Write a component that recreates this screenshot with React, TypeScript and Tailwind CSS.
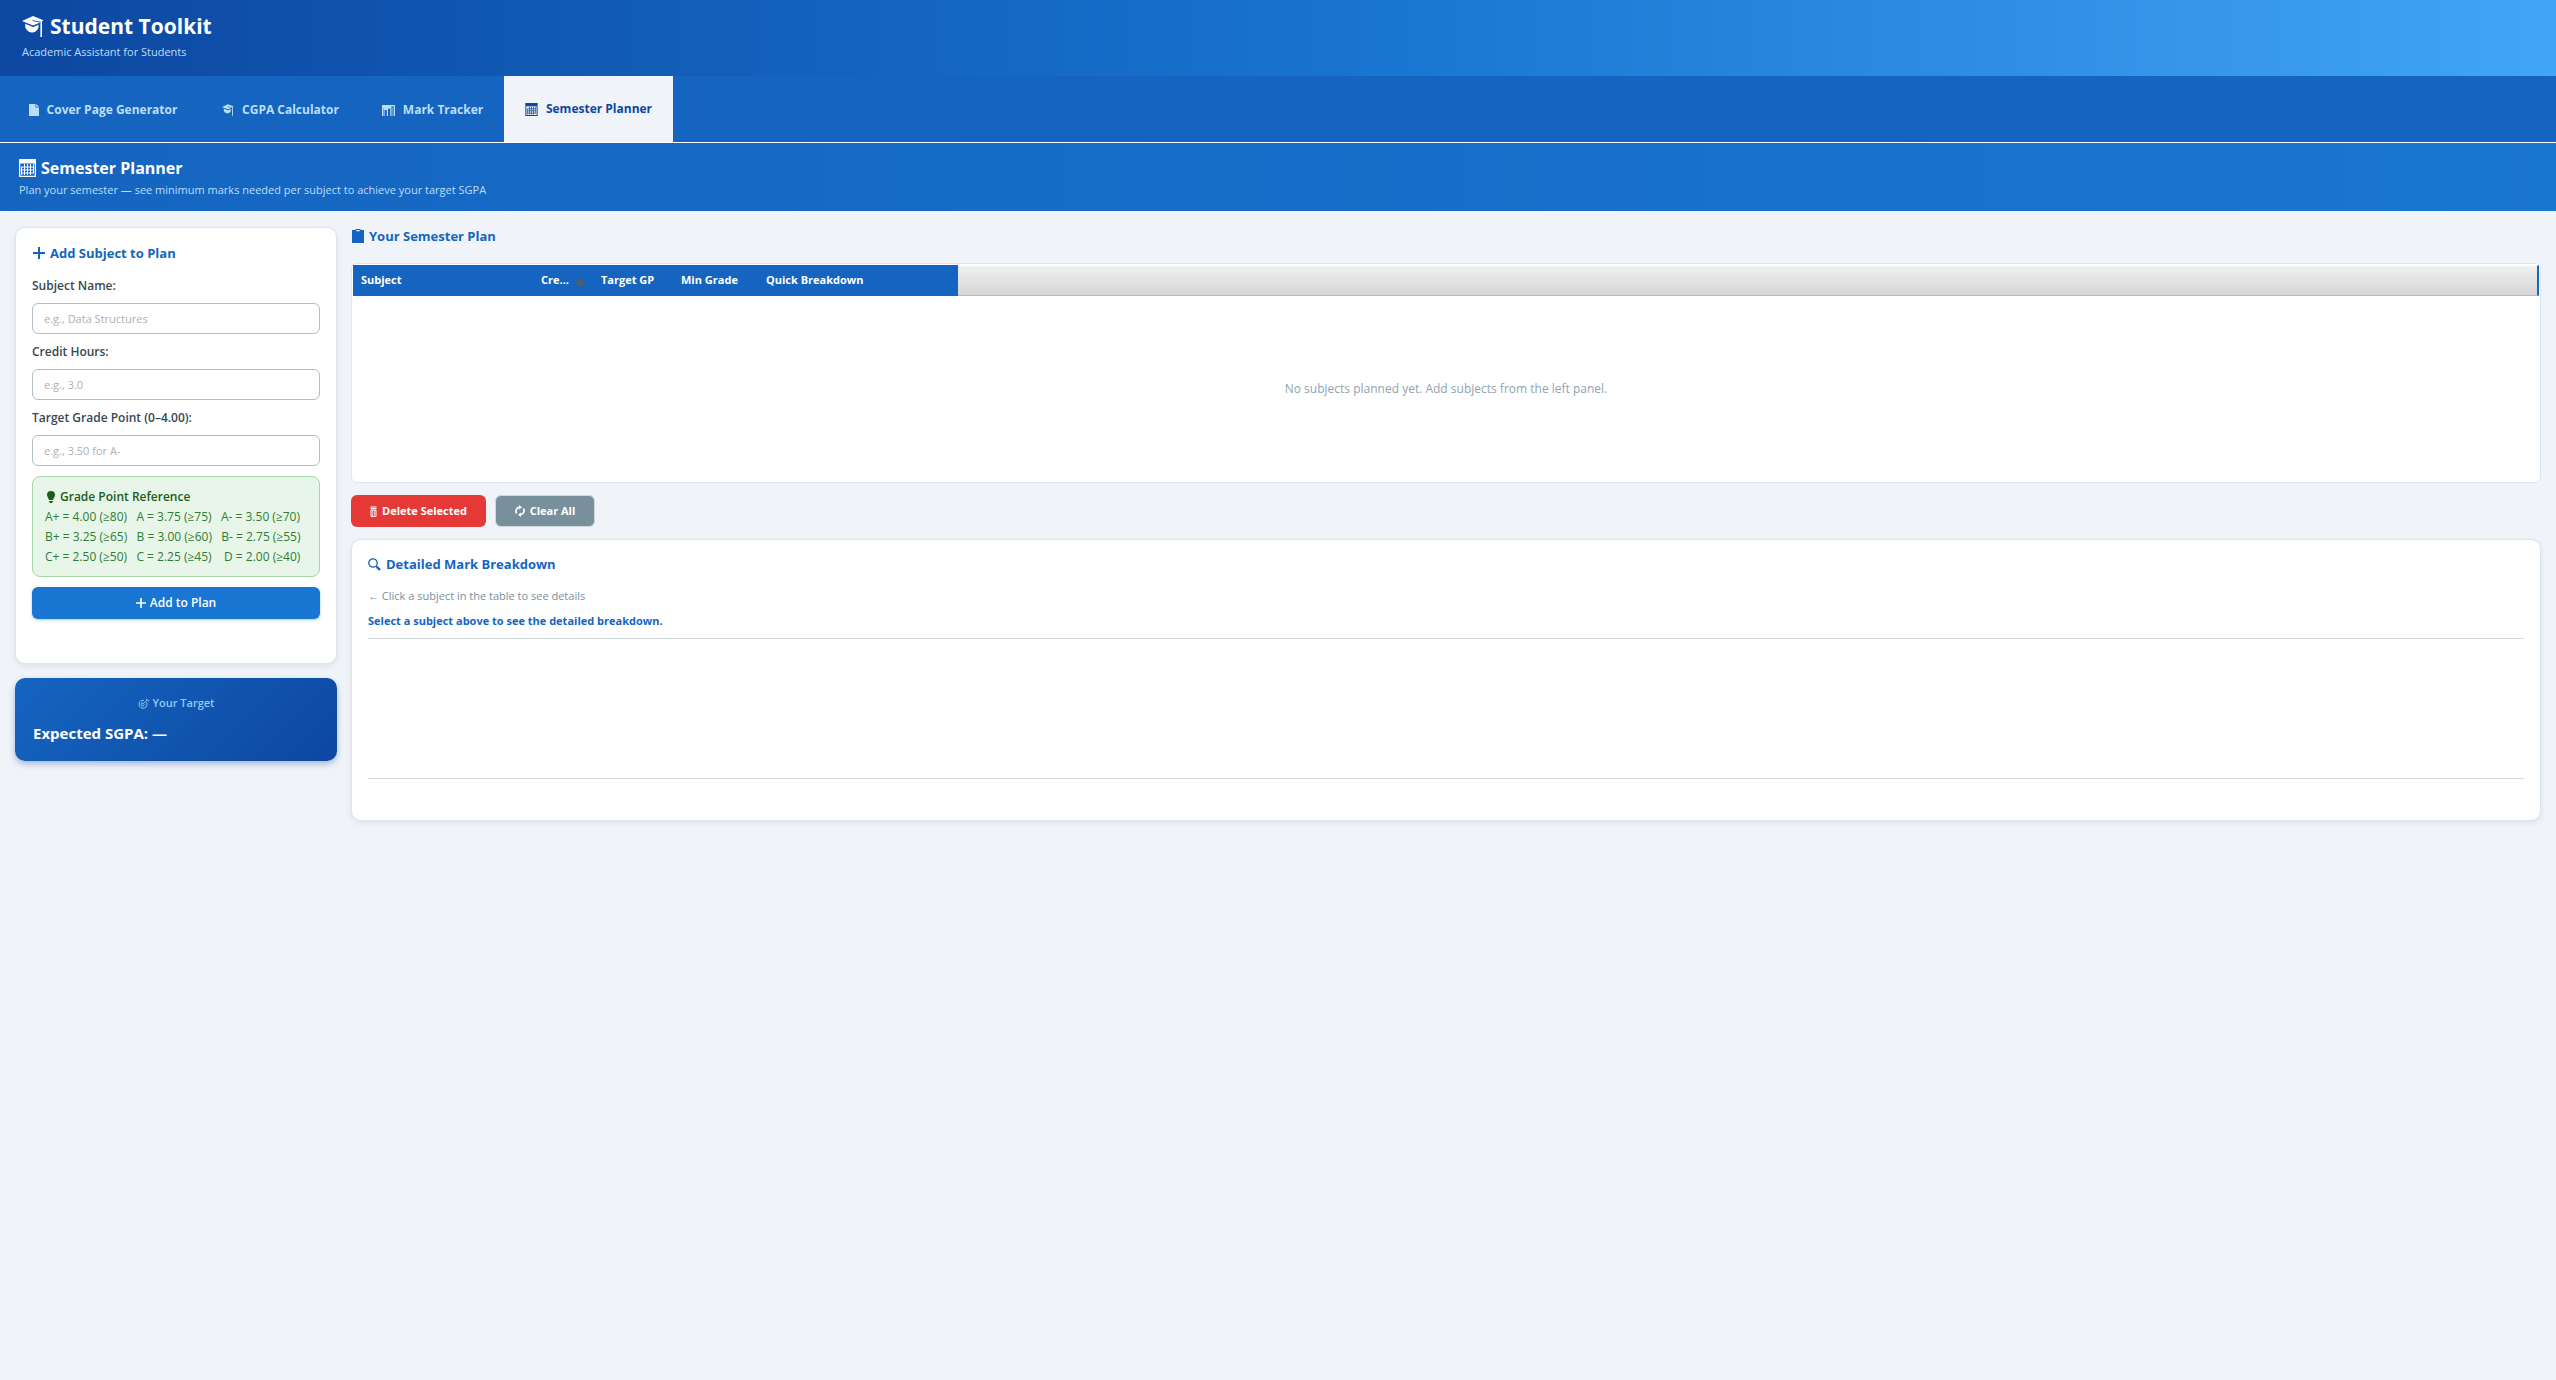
import React from "react";

type IconProps = { className?: string };

function CapIcon({ className }: IconProps) {
  return (
    <svg viewBox="0 0 22 21" className={className} fill="currentColor" aria-hidden="true">
      <path d="M11 0 21.5 4.200 20 5.200V21h-1.600V6.600L11 9.400 0 5z" />
      <path d="M3.200 7.200v4c1.200 3.600 4.300 5.300 7 5.300 2.600 0 5-1.700 6.300-4.700V8.600L11 11z" />
      <path d="M10.500 4.600 18.800 6.200" fill="none" stroke="#1150ab" strokeWidth=".9" />
      <path d="M3.200 7.400 11 10.300l5.500-2" fill="none" stroke="#1150ab" strokeWidth=".9" />
    </svg>
  );
}

function PageIcon({ className }: IconProps) {
  return (
    <svg viewBox="0 0 10 12" className={className} fill="currentColor" aria-hidden="true">
      <path d="M0 0h6.500v3.500H10V12H0z" />
      <path d="M7.200 0 10 2.800H7.200z" />
    </svg>
  );
}

function ChartIcon({ className }: IconProps) {
  return (
    <svg viewBox="0 0 13 11" className={className} fill="currentColor" aria-hidden="true">
      <path d="M0 0h13v11h-1.200V1.200H9.500V11H8.300V3.500H6V11H4.800V5H2.600v6H1.500V3.500H1V11H0z" />
      <path d="M2.600 2.200h5v1.300h-5zM10.300 2h1v9h-1z" opacity=".6" />
    </svg>
  );
}

function CalendarIcon({ className }: IconProps) {
  return (
    <svg viewBox="0 0 17 18" className={className} fill="currentColor" aria-hidden="true">
      <path fillRule="evenodd" d="M0 0h17v18H0zM1.300 4.500v12.200h14.400V4.500z" />
      <path d="M5 5h1v11H5zM8 5h1v11H8zM11 5h1v11h-1zM14 5h1v9h-1zM2.500 7.500H15v1H2.500zM2.500 10.500H15v1H2.500zM2.500 13.500H15v1H2.500zM2 8h1v8H2z" />
    </svg>
  );
}

function ClipboardIcon({ className }: IconProps) {
  return (
    <svg viewBox="0 0 12 14" className={className} fill="currentColor" aria-hidden="true">
      <path fillRule="evenodd" d="M0 1h3.500V0h5v1H12v13H0zM4.300 1v1.200h3.400V1z" />
    </svg>
  );
}

function PlusIcon({ className }: IconProps) {
  return (
    <svg viewBox="0 0 12 12" className={className} fill="currentColor" aria-hidden="true">
      <path d="M5 0h2v5h5v2H7v5H5V7H0V5h5z" />
    </svg>
  );
}

function BulbIcon({ className }: IconProps) {
  return (
    <svg viewBox="0 0 8 12" className={className} fill="currentColor" aria-hidden="true">
      <path d="M4 0a4 4 0 0 1 4 4c0 2-1.700 3-2 5H2C1.700 7 0 6 0 4a4 4 0 0 1 4-4zM2.200 10h3.600v1L5 12H3l-.8-1z" />
    </svg>
  );
}

function TargetIcon({ className }: IconProps) {
  return (
    <svg viewBox="0 0 12 11" className={className} fill="none" stroke="currentColor" aria-hidden="true">
      <path d="M8.300 4A4 4 0 1 1 6 2.400" />
      <path d="M6.200 6.300a1.600 1.600 0 1 1-1-1.300M4.600 6.400 9.500 1.700M8.600 2.500V.6M9.300 2.700h2.200" strokeWidth=".9" />
    </svg>
  );
}

function TrashIcon({ className }: IconProps) {
  return (
    <svg viewBox="0 0 7 11" className={className} fill="none" stroke="currentColor" aria-hidden="true">
      <path d="M.5 1h6M.5 2.500h6M1 4v6.500h5V4z" />
      <path d="M2.600 4v6M4.400 4v6" opacity=".7" />
    </svg>
  );
}

function RefreshIcon({ className }: IconProps) {
  return (
    <svg viewBox="0 0 10 12" className={className} fill="none" stroke="currentColor" strokeWidth="1.700" aria-hidden="true">
      <path d="M1.500 8.500C.4 6 .9 3 4.800 2.200M8.500 3.500c1.100 2.500.6 5.500-3.300 6.300" />
      <path d="M4 0v4.500L7 2.200zM6 7.500V12L3 9.800z" fill="currentColor" stroke="none" />
    </svg>
  );
}

function SearchIcon({ className }: IconProps) {
  return (
    <svg viewBox="0 0 13 13" className={className} fill="none" stroke="currentColor" aria-hidden="true">
      <circle cx="5" cy="5" r="4.200" strokeWidth="1.300" />
      <path d="M8 8l1.500 1.500" strokeWidth="1.300" />
      <path d="M8.800 8.800 12 12" strokeWidth="2.400" />
    </svg>
  );
}

const tabs = [
  { label: "Cover Page Generator", icon: <PageIcon className="h-3 w-[10px]" />, width: "min-w-[194px]" },
  { label: "CGPA Calculator", icon: <CapIcon className="h-3 w-3" />, width: "min-w-[161px]" },
  { label: "Mark Tracker", icon: <ChartIcon className="h-[11px] w-[13px]" />, width: "min-w-[143px]" },
  { label: "Semester Planner", icon: <CalendarIcon className="h-[13px] w-[13px]" />, width: "min-w-[169px]", active: true },
];

const fields = [
  { id: "subject", label: "Subject Name:", hint: "e.g., Data Structures" },
  { id: "credits", label: "Credit Hours:", hint: "e.g., 3.0" },
  { id: "target", label: "Target Grade Point (0–4.00):", hint: "e.g., 3.50 for A-" },
];

const gradeRows = [
  "A+ = 4.00 (≥80)   A = 3.75 (≥75)   A- = 3.50 (≥70)",
  "B+ = 3.25 (≥65)   B = 3.00 (≥60)   B- = 2.75 (≥55)",
  "C+ = 2.50 (≥50)   C = 2.25 (≥45)    D = 2.00 (≥40)",
];

export default function App() {
  return (
    <div className="min-h-screen bg-[#f0f4f9] font-['Open_Sans','Noto_Sans',sans-serif] text-xs">
      <header className="bg-linear-to-r from-[#0d47a1] via-[#1976d2] via-55% to-[#42a5f5] px-[22px] pt-[10px] pb-[14px]">
        <h1 className="flex items-center gap-[6px] text-[21px] leading-8 font-bold text-white">
          <CapIcon className="h-[21px] w-[22px]" />
          Student Toolkit
        </h1>
        <p className="text-[11px] leading-5 text-[#bbdefb]">Academic Assistant for Students</p>
      </header>

      <nav className="flex h-[67px] border-b border-white bg-[#1565c0] pl-[6px]">
        {tabs.map((t) => (
          <button
            key={t.label}
            type="button"
            className={`flex items-center justify-center gap-2 font-bold ${t.width} ${
              t.active ? "bg-[#f0f4f9] text-[#0d47a1]" : "pt-[2px] text-[#bbdefb]"
            }`}
          >
            {t.icon}
            {t.label}
          </button>
        ))}
      </nav>

      <section className="bg-linear-to-r from-[#1565c0] to-[#1976d2] px-[19px] pt-[13px] pb-[11px]">
        <h2 className="flex items-center gap-[5px] text-base leading-6 font-bold text-white">
          <CalendarIcon className="h-[18px] w-[17px]" />
          Semester Planner
        </h2>
        <p className="text-[11px] leading-5 text-[#bbdefb]">
          Plan your semester — see minimum marks needed per subject to achieve your target SGPA
        </p>
      </section>

      <main className="grid grid-cols-[322px_minmax(0,1fr)] items-start gap-[14px] px-[15px] py-4">
        <div className="flex flex-col gap-[14px]">
          <form className="rounded-[10px] border border-[#dce4f0] bg-white px-4 pt-[15px] pb-11 shadow-[0_2px_6px_rgba(0,0,0,0.08)]">
            <h3 className="mb-[14px] flex items-center gap-[5px] text-[13px] leading-5 font-bold text-[#1565c0]">
              <PlusIcon className="ml-px h-3 w-3" />
              Add Subject to Plan
            </h3>
            {fields.map((f) => (
              <div key={f.id} className="mb-[9px]">
                <label htmlFor={f.id} className="mb-2 block leading-[18px] font-semibold text-[#37474f]">
                  {f.label}
                </label>
                <input
                  id={f.id}
                  placeholder={f.hint}
                  className="block h-[31px] w-full rounded-md border border-[#b0bec5] bg-white px-[11px] text-[11px] placeholder:text-[#b0b0b0]"
                />
              </div>
            ))}
            <div className="mt-[10px] rounded-lg border border-[#a5d6a7] bg-[#e8f5e9] px-3 pt-[10px] pb-[9px] leading-5 whitespace-pre text-[#2e7d32]">
              <h4 className="flex items-center gap-[5px] pl-[2px] font-semibold text-[#1b5e20]">
                <BulbIcon className="h-3 w-2" />
                Grade Point Reference
              </h4>
              {gradeRows.map((r) => (
                <p key={r}>{r}</p>
              ))}
            </div>
            <button
              type="button"
              className="mt-[10px] flex h-8 w-full items-center justify-center gap-1 rounded-md bg-[#1976d2] font-semibold text-white shadow-[0_1px_3px_rgba(25,118,210,0.4)]"
            >
              <PlusIcon className="h-[10px] w-[10px]" />
              Add to Plan
            </button>
          </form>

          <section className="rounded-[10px] bg-linear-135 from-[#1565c0] to-[#0d47a1] px-[18px] pt-[15px] pb-4 shadow-[0_3px_6px_rgba(13,71,161,0.35)]">
            <h3 className="flex items-center justify-center gap-[3px] text-[11px] leading-5 font-semibold text-[#90caf9]">
              <TargetIcon className="h-[11px] w-3" />
              Your Target
            </h3>
            <p className="mt-2 text-[15px] leading-6 font-bold text-white">Expected SGPA: —</p>
          </section>
        </div>

        <div className="min-w-0">
          <h3 className="flex items-center gap-[5px] pl-px text-[13px] leading-[18px] font-bold text-[#1565c0]">
            <ClipboardIcon className="h-[14px] w-3" />
            Your Semester Plan
          </h3>

          <div className="mt-[18px] h-[220px] rounded-md border border-[#dce6f0] bg-white p-px">
            <table className="h-full w-full table-fixed border-separate border-spacing-0">
              <thead>
                <tr className="h-[31px] text-left text-[11px] text-white">
                  <th className="w-[180px] bg-[#1565c0] px-2">Subject</th>
                  <th className="w-[60px] bg-[#1565c0] pl-2">
                    <span className="flex items-center gap-[7px]">
                      Cre...
                      <svg viewBox="0 0 9 8" className="h-2 w-[9px]" fill="#5a5a5a" aria-hidden="true">
                        <path d="M4.500 0 9 8H0z" />
                      </svg>
                    </span>
                  </th>
                  <th className="w-20 bg-[#1565c0] px-2">Target GP</th>
                  <th className="w-[85px] bg-[#1565c0] px-2">Min Grade</th>
                  <th className="w-[200px] bg-[#1565c0] px-2">Quick Breakdown</th>
                  <td className="border-t border-r-2 border-b border-t-white border-r-[#1565c0] border-b-[#bababa] bg-linear-to-b from-[#efefef] to-[#d6d6d6]" />
                </tr>
              </thead>
              <tbody>
                <tr>
                  <td colSpan={6} className="text-center text-[#90a4ae]">
                    No subjects planned yet. Add subjects from the left panel.
                  </td>
                </tr>
              </tbody>
            </table>
          </div>

          <div className="mt-3 flex gap-[9px]">
            <button
              type="button"
              className="flex h-8 w-[135px] items-center justify-center gap-[5px] rounded-md bg-[#e53935] text-[11px] font-bold text-white"
            >
              <TrashIcon className="h-[11px] w-[7px]" />
              Delete Selected
            </button>
            <button
              type="button"
              className="flex h-8 w-[100px] items-center justify-center gap-[5px] rounded-md border border-[#cfd8dc] bg-[#78909c] text-[11px] font-bold text-white"
            >
              <RefreshIcon className="h-3 w-[10px]" />
              Clear All
            </button>
          </div>

          <section className="mt-3 rounded-[10px] border border-[#dce4f0] bg-white px-4 pt-[14px] pb-[41px] shadow-[0_2px_6px_rgba(0,0,0,0.08)]">
            <h3 className="flex items-center gap-[5px] text-[13px] leading-5 font-bold text-[#1565c0]">
              <SearchIcon className="h-[13px] w-[13px]" />
              Detailed Mark Breakdown
            </h3>
            <p className="mt-[13px] text-[11px] leading-[18px] text-[#78909c]">
              ← Click a subject in the table to see details
            </p>
            <p className="mt-[7px] text-[11px] leading-[18px] font-bold text-[#1565c0]">
              Select a subject above to see the detailed breakdown.
            </p>
            <div className="mt-2 h-[141px] border-y border-[#cfd8dc]" />
          </section>
        </div>
      </main>
    </div>
  );
}
